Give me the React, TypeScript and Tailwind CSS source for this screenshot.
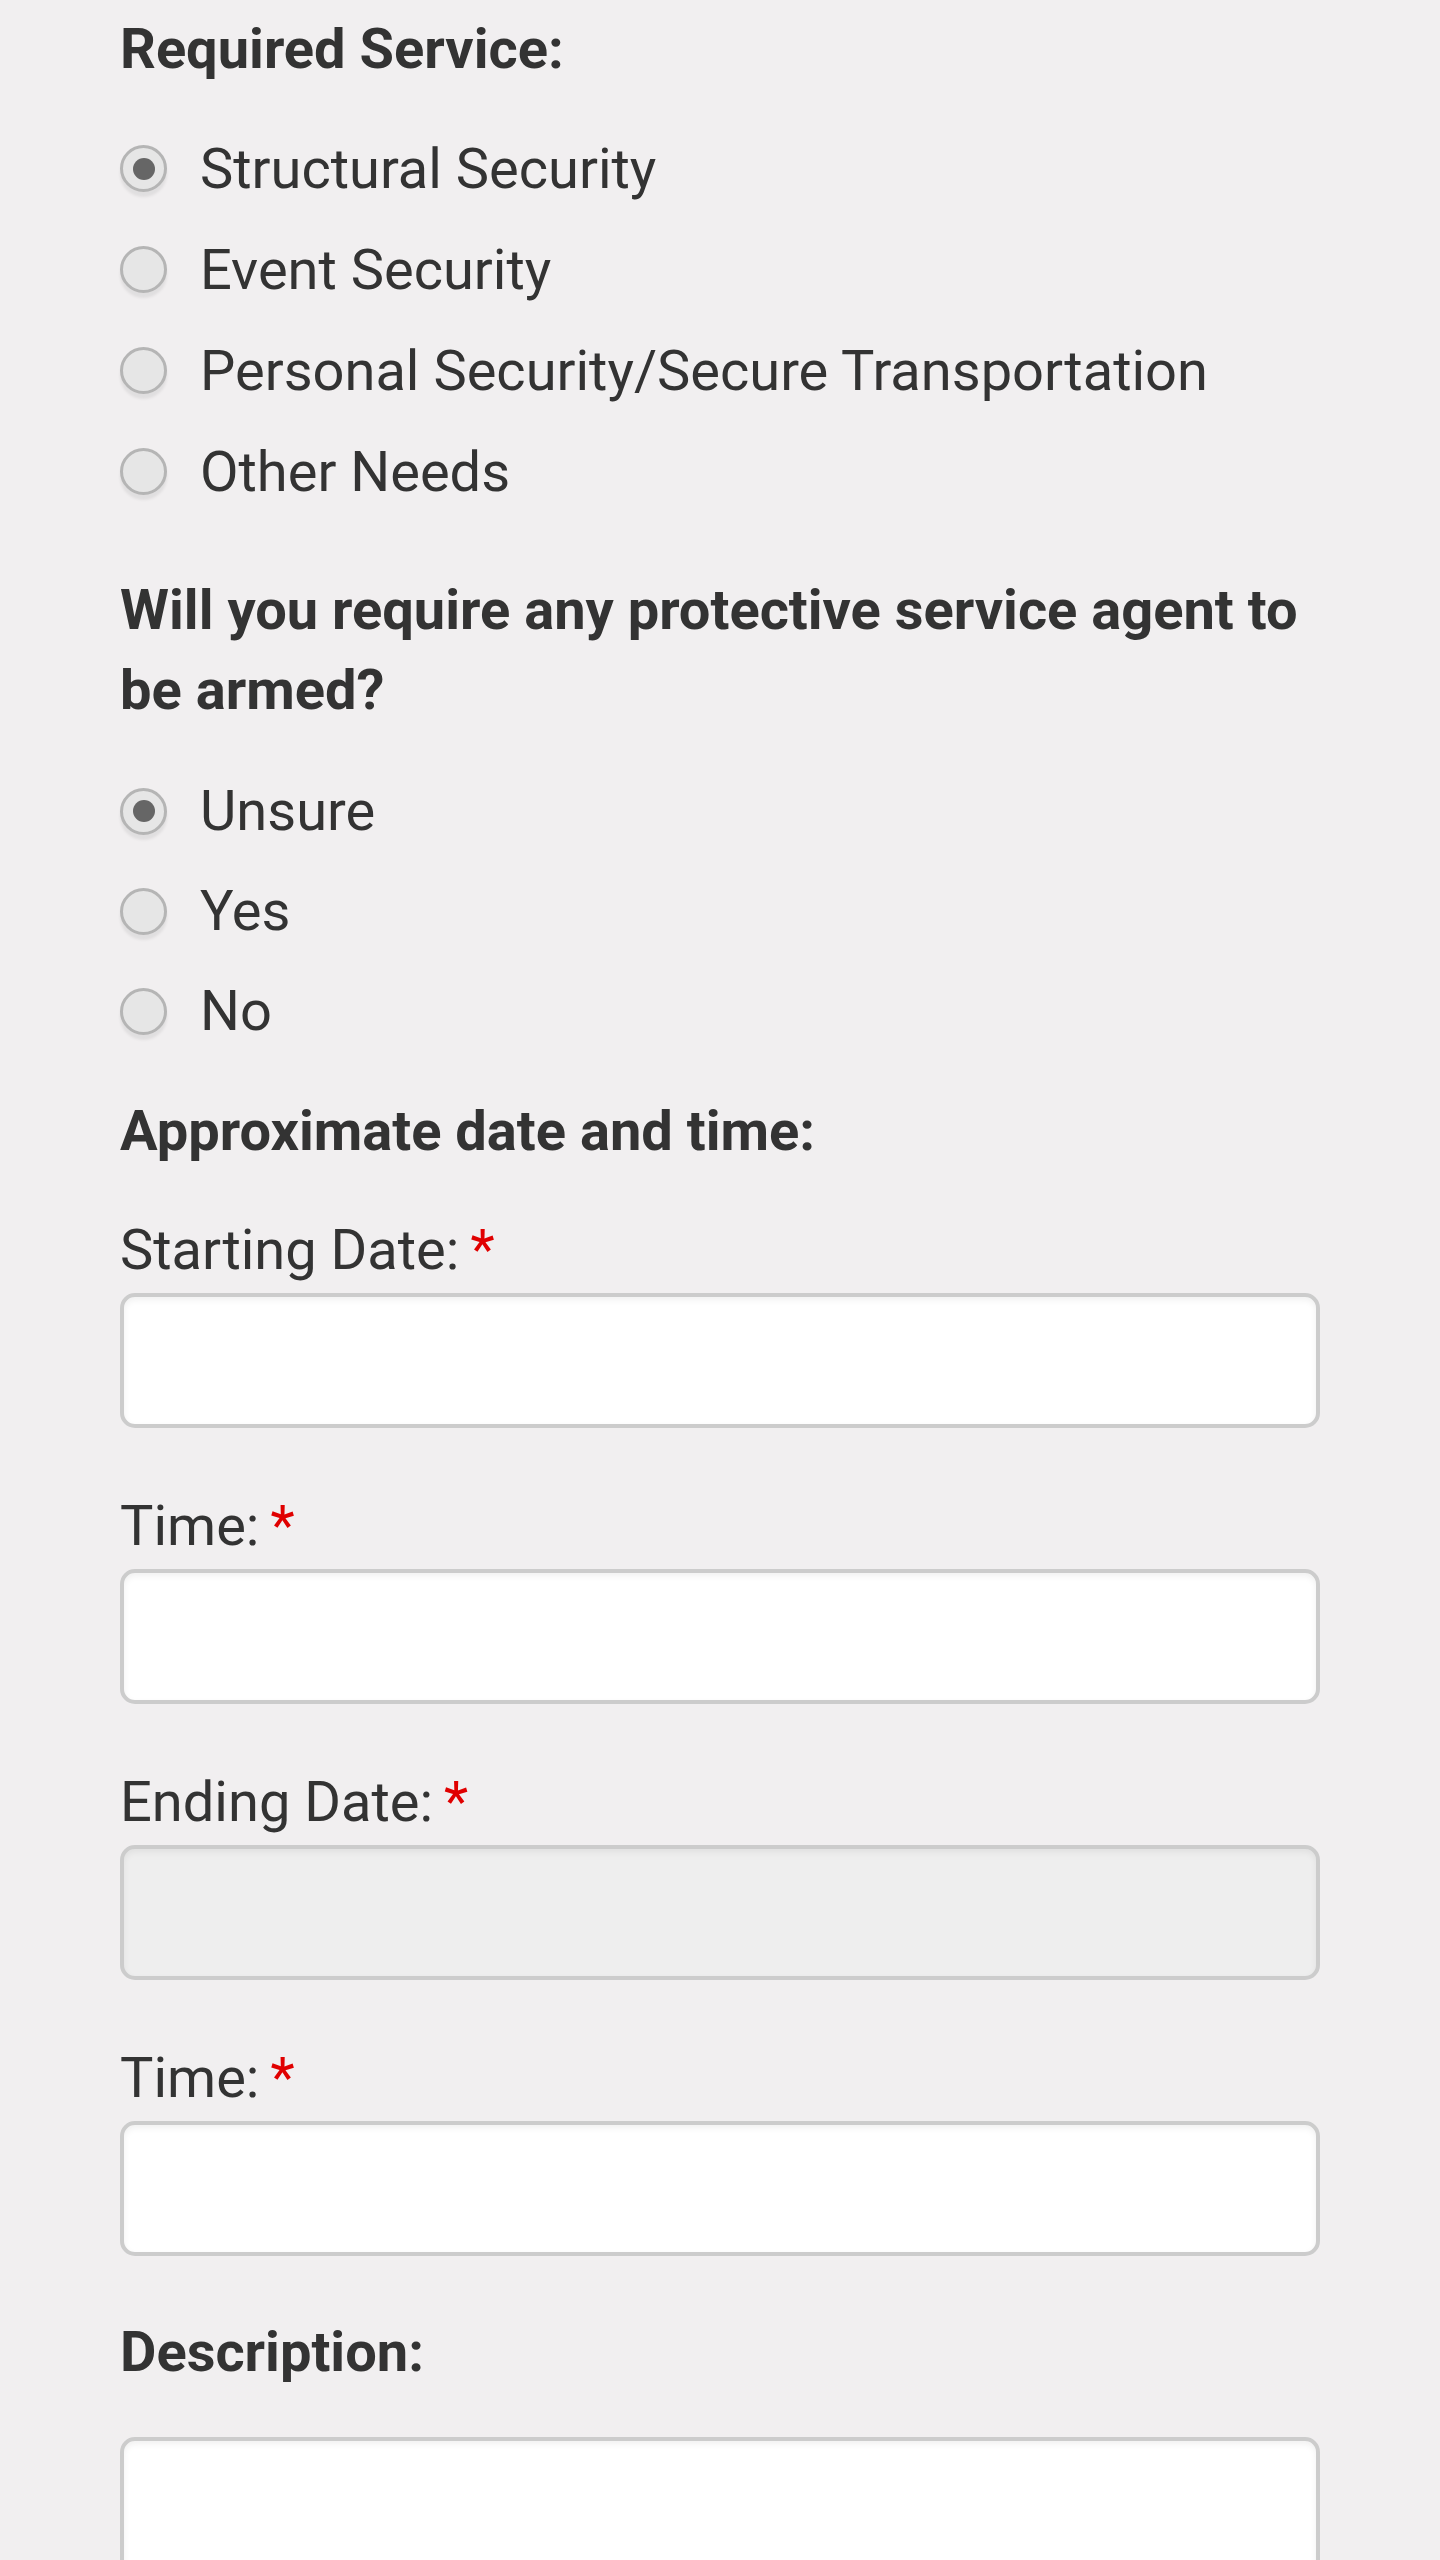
import React from 'react';

const font = { fontFamily: 'Roboto, "Noto Sans", Arial, sans-serif' };

function Radio({ checked, label }: { checked?: boolean; label: string }) {
  return (
    <label className="flex items-center gap-[33px] h-[101px]">
      <span className="flex items-center justify-center w-[47px] h-[47px] rounded-full border-[3px] border-[#b5b5b5] bg-[#e6e6e6] shadow-[0_5px_3px_rgba(0,0,0,0.07)] shrink-0">
        {checked && <span className="w-[22px] h-[22px] rounded-full bg-[#666]" />}
      </span>
      <span className="text-[56px] leading-[80px] text-[#333]">{label}</span>
    </label>
  );
}

function Field({ label, disabled }: { label: string; disabled?: boolean }) {
  return (
    <div className="mb-[58px]">
      <div className="text-[56px] leading-[80px] text-[#333]">
        {label}
        <span className="ml-[11px] text-[#e00000]">*</span>
      </div>
      <input
        type="text"
        disabled={disabled}
        className={
          'mt-[3px] block w-full h-[135px] rounded-[15px] border-4 border-[#cccccc] shadow-[inset_0_3px_6px_rgba(0,0,0,0.06)] outline-none ' +
          (disabled ? 'bg-[#eeeeee]' : 'bg-white')
        }
      />
    </div>
  );
}

export default function App() {
  return (
    <div className="min-h-[2560px] bg-[#f1eff0] px-[120px] pt-[9px] overflow-hidden" style={font}>
      <h2 className="text-[56px] leading-[80px] font-bold text-[#333]">Required Service:</h2>
      <div className="mt-[29px] flex flex-col">
        <Radio checked label="Structural Security" />
        <Radio label="Event Security" />
        <Radio label="Personal Security/Secure Transportation" />
        <Radio label="Other Needs" />
      </div>

      <h2 className="mt-[48px] text-[56px] leading-[80px] font-bold text-[#333]">
        Will you require any protective service agent to be armed?
      </h2>
      <div className="mt-[31px] flex flex-col [&>label]:h-[100px]">
        <Radio checked label="Unsure" />
        <Radio label="Yes" />
        <Radio label="No" />
      </div>

      <h2 className="mt-[30px] text-[56px] leading-[80px] font-bold text-[#333]">Approximate date and time:</h2>

      <div className="mt-[39px]">
        <Field label="Starting Date:" />
        <Field label="Time:" />
        <Field label="Ending Date:" disabled />
        <Field label="Time:" />
      </div>

      <h2 className="-mt-[2px] text-[56px] leading-[80px] font-bold text-[#333]">Description:</h2>
      <textarea className="mt-[45px] block w-full h-[400px] rounded-[15px] border-4 border-[#cccccc] bg-white shadow-[inset_0_3px_6px_rgba(0,0,0,0.06)] outline-none resize-none" />
    </div>
  );
}
